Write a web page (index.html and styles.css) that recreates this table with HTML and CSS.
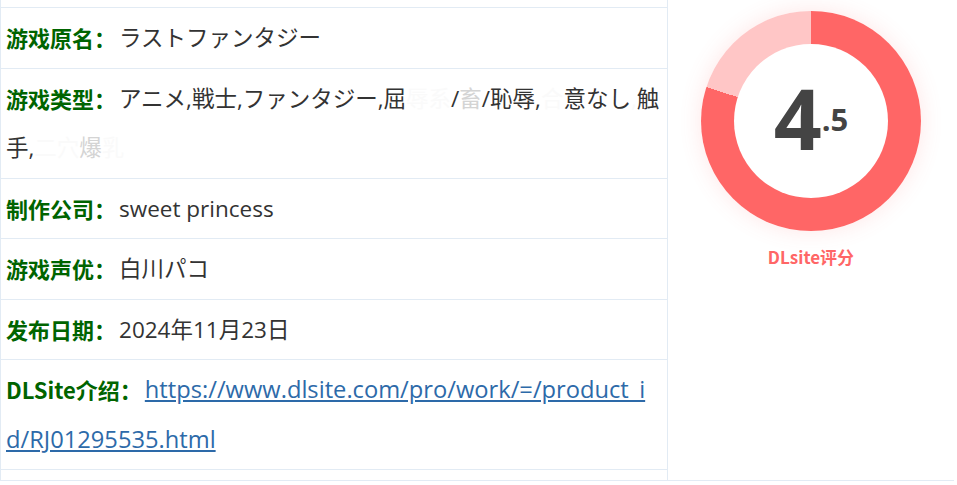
FILE: index.html
```html
<!DOCTYPE html>
<html lang="zh">
<head>
<meta charset="utf-8">
<title>游戏信息</title>
<link rel="stylesheet" href="styles.css">
</head>
<body>
<div class="info">
  <div class="table">
    <div class="row"><span class="label">游戏原名：</span><span class="val">ラストファンタジー</span></div>
    <div class="row"><span class="label">游戏类型：</span><span class="val">アニメ,戦士,ファンタジー,屈<span class="mask">辱系</span>/<span class="mask2">畜</span>/恥辱,<span class="mask">合</span>意なし<span class="mask">,</span>触<br>手,<span class="mask">二穴</span><span class="mask2">爆</span><span class="mask">乳</span></span></div>
    <div class="row"><span class="label">制作公司：</span><span class="val">sweet princess</span></div>
    <div class="row"><span class="label">游戏声优：</span><span class="val">白川パコ</span></div>
    <div class="row"><span class="label">发布日期：</span><span class="val">2024年11月23日</span></div>
    <div class="row"><span class="label">DLSite介绍：</span><a class="link" href="#">https://www.dlsite.com/pro/work/=/product_i<br>d/RJ01295535.html</a></div>
  </div>
  <div class="score">
    <div class="donut">
      <div class="hole"><span class="num"><span class="big">4</span><span class="small">.5</span></span></div>
    </div>
    <div class="score-label">DLsite评分</div>
  </div>
</div>
</body>
</html>
```
FILE: styles.css
```css
body {
  margin: 0;
  background: #ffffff;
}

.info {
  display: flex;
  width: 954px;
  box-sizing: border-box;
  border-left: 1px solid #e2ebf4;
  border-bottom: 1px solid #e2ebf4;
}

.table {
  width: 667px;
  box-sizing: border-box;
  border-right: 1px solid #e2ebf4;
  padding: 7px 0 10px;
}

.row {
  border-top: 1px solid #e2ebf4;
  padding: 5px 5px;
  line-height: 49.5px;
  font-size: 22px;
  white-space: nowrap;
}

.row:last-child {
  border-bottom: 1px solid #e2ebf4;
}

.label,
.val,
.link {
  vertical-align: top;
  line-height: 49.5px;
}

.label {
  font-family: "Noto Sans CJK SC", sans-serif;
  font-weight: 700;
  color: #006400;
  margin-right: 3px;
}

.val {
  font-family: "Open Sans", "Noto Sans CJK JP", sans-serif;
  font-size: 22.5px;
  color: #333333;
}

.mask {
  color: #fafafa;
}

.mask2 {
  color: #d4d4d4;
}

.link {
  font-family: "Open Sans", sans-serif;
  font-size: 23.7px;
  color: #2d6aa9;
  text-decoration: underline;
}

.score {
  flex: 1;
  display: flex;
  flex-direction: column;
  align-items: center;
  padding-top: 11px;
}

.donut {
  width: 220px;
  height: 220px;
  border-radius: 50%;
  background: conic-gradient(#ff6666 0deg 288deg, #ffc6c6 288deg 360deg);
  display: flex;
  align-items: center;
  justify-content: center;
  box-shadow: 0 0 22px rgba(255, 102, 102, 0.16);
}

.hole {
  width: 154px;
  height: 154px;
  border-radius: 50%;
  background: #ffffff;
  display: flex;
  align-items: center;
  justify-content: center;
}

.num {
  font-family: "Open Sans", sans-serif;
  font-weight: 700;
  color: #444444;
  line-height: 1;
  margin-top: -7px;
}

.big {
  font-size: 84px;
}

.small {
  font-size: 31px;
  vertical-align: 19px;
}

.score-label {
  margin-top: 15px;
  font-family: "Noto Sans CJK SC", sans-serif;
  font-weight: 700;
  font-size: 17px;
  line-height: 22px;
  color: #ff6666;
}
```
